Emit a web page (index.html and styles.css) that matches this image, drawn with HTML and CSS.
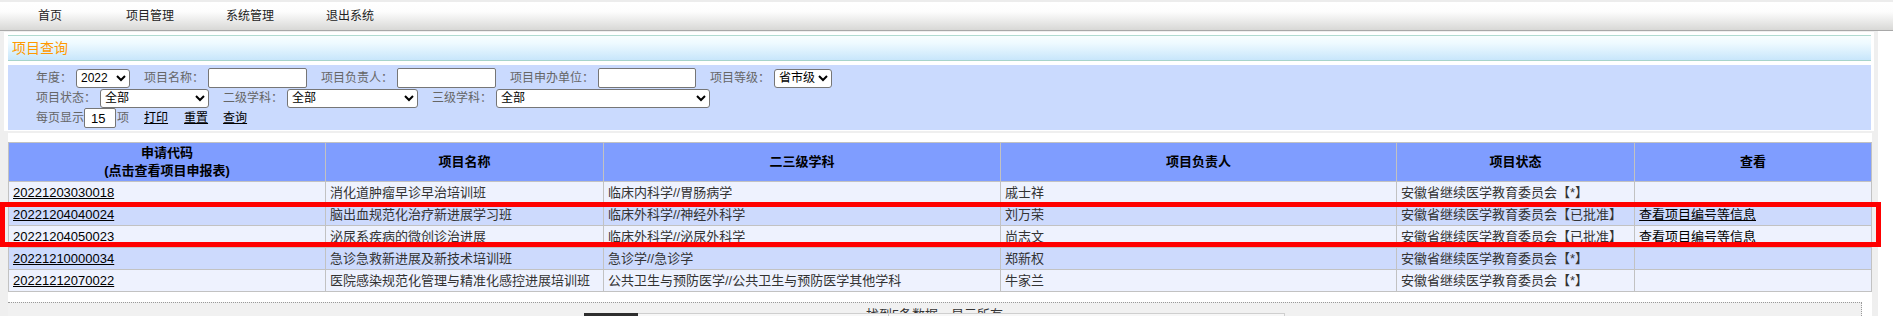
FILE: index.html
```html
<!DOCTYPE html>
<html lang="zh-CN">
<head>
<meta charset="utf-8">
<title>项目查询</title>
<link rel="stylesheet" href="styles.css">
</head>
<body>
<div class="nav">
  <a class="nav-item" href="#">首页</a>
  <a class="nav-item" href="#">项目管理</a>
  <a class="nav-item" href="#">系统管理</a>
  <a class="nav-item" href="#">退出系统</a>
</div>
<div class="main">
  <div class="panel-query">
    <div class="panel-title">项目查询</div>
    <div class="form">
      <div class="form-row">
        <span class="lbl">年度：</span>
        <select class="ctl sel-year"><option>2022</option></select>
        <span class="lbl">项目名称：</span>
        <input class="ctl txt" type="text">
        <span class="lbl">项目负责人：</span>
        <input class="ctl txt" type="text">
        <span class="lbl">项目申办单位：</span>
        <input class="ctl txt txt-unit" type="text">
        <span class="lbl">项目等级：</span>
        <select class="ctl sel-grade"><option>省市级</option></select>
      </div>
      <div class="form-row">
        <span class="lbl">项目状态：</span>
        <select class="ctl sel-status"><option>全部</option></select>
        <span class="lbl">二级学科：</span>
        <select class="ctl sel-sub2"><option>全部</option></select>
        <span class="lbl">三级学科：</span>
        <select class="ctl sel-sub3"><option>全部</option></select>
      </div>
      <div class="form-row">
        <span class="lbl lbl-tight">每页显示</span>
        <input class="txt-size" type="text" value="15">
        <span class="lbl unit">项</span>
        <a class="act act-print" href="#">打印</a>
        <a class="act act-reset" href="#">重置</a>
        <a class="act act-query" href="#">查询</a>
      </div>
    </div>
  </div>
  <div class="panel-list">
    <table class="grid">
      <colgroup>
        <col class="c1"><col class="c2"><col class="c3"><col class="c4"><col class="c5"><col class="c6">
      </colgroup>
      <thead>
        <tr>
          <th>申请代码<br>(点击查看项目申报表)</th>
          <th>项目名称</th>
          <th>二三级学科</th>
          <th>项目负责人</th>
          <th>项目状态</th>
          <th>查看</th>
        </tr>
      </thead>
      <tbody>
        <tr class="odd">
          <td><a class="code" href="#">20221203030018</a></td>
          <td>消化道肿瘤早诊早治培训班</td>
          <td>临床内科学//胃肠病学</td>
          <td>戚士祥</td>
          <td>安徽省继续医学教育委员会【*】</td>
          <td></td>
        </tr>
        <tr class="even">
          <td><a class="code" href="#">20221204040024</a></td>
          <td>脑出血规范化治疗新进展学习班</td>
          <td>临床外科学//神经外科学</td>
          <td>刘万荣</td>
          <td>安徽省继续医学教育委员会【已批准】</td>
          <td><a class="code" href="#">查看项目编号等信息</a></td>
        </tr>
        <tr class="odd">
          <td><a class="code" href="#">20221204050023</a></td>
          <td>泌尿系疾病的微创诊治进展</td>
          <td>临床外科学//泌尿外科学</td>
          <td>尚志文</td>
          <td>安徽省继续医学教育委员会【已批准】</td>
          <td><a class="code" href="#">查看项目编号等信息</a></td>
        </tr>
        <tr class="even">
          <td><a class="code" href="#">20221210000034</a></td>
          <td>急诊急救新进展及新技术培训班</td>
          <td>急诊学//急诊学</td>
          <td>郑新权</td>
          <td>安徽省继续医学教育委员会【*】</td>
          <td></td>
        </tr>
        <tr class="odd">
          <td><a class="code" href="#">20221212070022</a></td>
          <td>医院感染规范化管理与精准化感控进展培训班</td>
          <td>公共卫生与预防医学//公共卫生与预防医学其他学科</td>
          <td>牛家兰</td>
          <td>安徽省继续医学教育委员会【*】</td>
          <td></td>
        </tr>
      </tbody>
    </table>
    <div class="footer">找到5条数据，显示所有</div>
  </div>
</div>
<div class="floatbar"><span class="floatbar-dark"></span><span class="floatbar-light"><span class="floatbar-sep"></span></span></div>
<div class="mark"></div>
</body>
</html>
```

FILE: styles.css
```css
* { box-sizing: border-box; }
html, body { margin: 0; padding: 0; }
body {
  position: relative;
  width: 1893px;
  height: 316px;
  overflow: hidden;
  background: #fff;
  font-family: "Liberation Sans", "Noto Sans CJK SC", sans-serif;
  font-size: 12px;
  color: #333;
}

/* top navigation */
.nav {
  display: flex;
  height: 31px;
  border-top: 2px solid #ececec;
  border-bottom: 1px solid #a8a8a8;
  background: linear-gradient(#ffffff 0%, #fdfdfd 35%, #d8d8d6 100%);
}
.nav-item {
  width: 100px;
  text-align: center;
  line-height: 28px;
  color: #222;
  text-decoration: none;
}

/* main area */
.main {
  width: 1878px;
  height: 285px;
  padding-top: 1px;
  background: #efefef;
}

.panel-query {
  margin-left: 4px;
  width: 1870px;
  padding: 3px 3px 1px 4px;
  background: #fff;
}
.panel-title {
  height: 26px;
  padding: 2px 0 0 4px;
  border-top: 1px solid #b0dbd1;
  border-bottom: 1px solid #a6d4cb;
  background: linear-gradient(#f8feff 0%, #eefaff 30%, #c8e6fb 100%);
  color: #ff9900;
  font-size: 14px;
  line-height: 21px;
}
.form {
  margin-top: 4px;
  height: 65px;
  padding: 3px 0 0 28px;
  background: #cadafe;
}
.form-row {
  display: flex;
  align-items: center;
  height: 20px;
  white-space: nowrap;
}
.lbl {
  margin-right: 4px;
  color: #666;
  line-height: 16px;
}
.lbl-tight { margin-right: 0; }
.unit { margin-left: 1px; }
.ctl { margin-right: 14px; }

select {
  height: 19px;
  padding: 0;
  font-family: "Liberation Sans", "Noto Sans CJK SC", sans-serif;
  font-size: 12px;
  color: #000;
  background-color: #fff;
  border: 1px solid #767676;
  border-radius: 3px;
}
.sel-year { width: 54px; }
.sel-grade { width: 58px; }
.sel-status { width: 109px; }
.sel-sub2 { width: 131px; }
.sel-sub3 { width: 214px; }

input {
  height: 20px;
  padding: 0 3px;
  font-family: "Liberation Sans", "Noto Sans CJK SC", sans-serif;
  font-size: 13px;
  color: #000;
  background: #fff;
  border: 1px solid #767676;
  border-radius: 2px;
}
.txt { width: 99px; }
.txt-unit { width: 98px; }
.txt-size { width: 32px; padding-left: 6px; }

.act {
  color: #000;
  text-decoration: underline;
  line-height: 16px;
}
.act-print { margin-left: 11px; }
.act-reset { margin-left: 16px; }
.act-query { margin-left: 15px; }

/* result list */
.panel-list {
  margin: 2px 0 0 8px;
  width: 1864px;
  height: 200px;
  padding-top: 9px;
  background: #fff;
}
.grid {
  width: 1863px;
  border-collapse: collapse;
  table-layout: fixed;
  font-size: 13px;
}
.c1 { width: 317px; }
.c2 { width: 278px; }
.c3 { width: 397px; }
.c4 { width: 396px; }
.c5 { width: 238px; }
.c6 { width: 237px; }
.grid th,
.grid td {
  border: 1px solid #c2c2c2;
}
.grid th {
  height: 39px;
  padding: 0;
  background: #7f9dff;
  color: #000;
  font-weight: bold;
  line-height: 18px;
  text-align: center;
  vertical-align: middle;
}
.grid td {
  height: 22px;
  padding: 0 4px;
  line-height: 20px;
  color: #333;
  white-space: nowrap;
  overflow: hidden;
  vertical-align: middle;
}
.grid tr.odd td { background: #eef2fe; }
.grid tr.even td { background: #cddafd; }
.code {
  color: #000;
  text-decoration: underline;
}

.footer {
  margin-top: 10px;
  width: 1854px;
  height: 40px;
  padding-top: 3px;
  border-top: 1px dotted #9a9a9a;
  border-right: 1px dotted #9a9a9a;
  background: #f1f1f1;
  font-size: 13px;
  line-height: 17px;
  color: #333;
  text-align: center;
}

/* floating bar cut at the bottom edge */
.floatbar {
  position: absolute;
  left: 584px;
  top: 313px;
  width: 701px;
  height: 10px;
  display: flex;
}
.floatbar-dark {
  width: 54px;
  background: #2e2e2e;
}
.floatbar-light {
  flex: 1;
  position: relative;
  background: #f7f7f7;
  border-top: 1px solid #cfcfcf;
  border-right: 1px solid #cfcfcf;
}
.floatbar-sep {
  position: absolute;
  left: 250px;
  top: 0;
  width: 1px;
  height: 10px;
  background: #c8c8c8;
}

/* red annotation rectangle */
.mark {
  position: absolute;
  left: 0;
  top: 202px;
  width: 1881px;
  height: 45px;
  border: 5px solid #ff0000;
  pointer-events: none;
}
```
